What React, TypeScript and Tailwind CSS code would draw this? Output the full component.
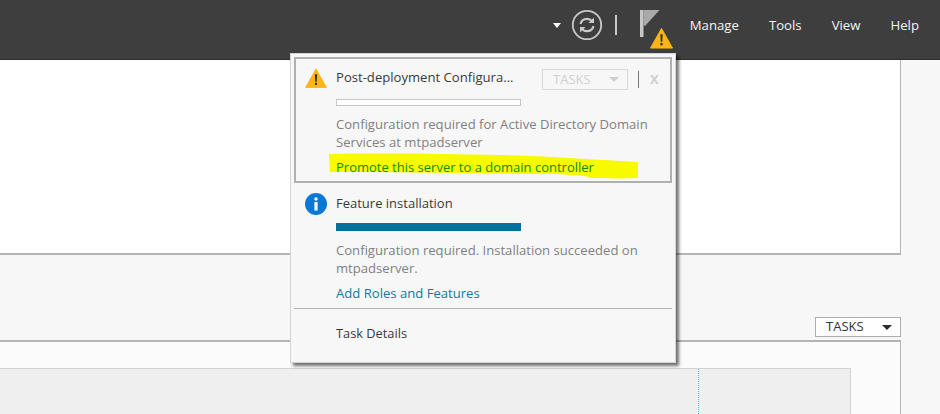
const font = "font-['Open_Sans',sans-serif]";

function RefreshIcon() {
  return (
    <svg width="32" height="32" viewBox="0 0 32 32" fill="none">
      <circle cx="16" cy="16" r="14.2" stroke="#c9c9c9" strokeWidth="1.8" />
      <path d="M9.5 15c.8-3.4 3.4-5.2 6.5-5.2 2.2 0 3.9.9 5 2.4" stroke="#c9c9c9" strokeWidth="2.2" />
      <path d="M23 8.5v5.6h-5.6z" fill="#c9c9c9" />
      <path d="M22.5 17c-.8 3.4-3.4 5.2-6.5 5.2-2.2 0-3.9-.9-5-2.4" stroke="#c9c9c9" strokeWidth="2.2" />
      <path d="M9 23.5v-5.6h5.6z" fill="#c9c9c9" />
    </svg>
  );
}

function WarningIcon({ width, height }: { width: number; height: number }) {
  return (
    <svg width={width} height={height} viewBox="0 0 24 22">
      <path d="M12 1 23.5 21.5H.5z" fill="#fdb515" stroke="#fdb515" strokeLinejoin="round" />
      <path d="M10.8 7h2.4l-.4 8h-1.6z" fill="#2b2b2b" />
      <rect x="10.9" y="16.2" width="2.2" height="2.4" fill="#2b2b2b" />
    </svg>
  );
}

function FlagIcon() {
  return (
    <svg width="20" height="27" viewBox="0 0 20 27">
      <rect x="0" y="0" width="3.5" height="27" fill="#c6c6c6" />
      <path d="M3.5 0H19.5L5 16 3.5 15z" fill="#a9a9a9" />
    </svg>
  );
}

function Highlight() {
  return (
    <svg className="absolute left-[33px] top-[94px]" width="312" height="30" viewBox="0 0 312 30">
      <path
        d="M0 1C60 0 120 1 170 2 220 3 270 7 309 9L309 25C290 26 270 25 262 25 255 22 240 21 200 21 130 20 60 19 1 19z"
        fill="#f8fa00"
      />
    </svg>
  );
}

export default function App() {
  return (
    <div className={`${font} relative w-[940px] h-[414px] overflow-hidden bg-[#f7f7f7] flex flex-col`}>
      {/* top bar */}
      <header className="h-[60px] shrink-0 bg-[#3e3e3e] flex items-center pb-[8px] text-white text-[13.2px] border-b border-[#2f2f2f]">
        <div className="ml-auto flex items-center">
          <span className="w-0 h-0 border-x-[4px] border-x-transparent border-t-[5px] border-t-white mr-[10px]" />
          <div className="-mt-[2px]">
            <RefreshIcon />
          </div>
          <span className="w-[2px] h-[20px] bg-[#c9c9c9] -mt-[2px] ml-[12px] mr-[23px]" />
          <div className="relative w-[24px] h-[27px] -mt-[5px] mr-[26px]">
            <FlagIcon />
            <div className="absolute left-[10px] top-[17px]">
              <WarningIcon width={23} height={22} />
            </div>
          </div>
          <nav className="flex items-center gap-[30px] pr-[21px] text-[#f4f4f4]">
            <span>Manage</span>
            <span>Tools</span>
            <span>View</span>
            <span>Help</span>
          </nav>
        </div>
      </header>

      {/* dashboard panels */}
      <main className="flex-1 flex flex-col pr-[39px]">
        <section className="h-[195px] shrink-0 bg-white border-r border-b-2 border-[#b4b4b4]" />
        <div className="flex justify-end mt-[62px] mb-[3px]">
          <div className="w-[86px] h-[20px] bg-white border border-[#aeaeae] flex items-center justify-between pl-[10px] pr-[8px] text-[13px] text-[#333]">
            <span>TASKS</span>
            <span className="w-0 h-0 border-x-[5px] border-x-transparent border-t-[5px] border-t-[#2a2a2a]" />
          </div>
        </div>
        <section className="flex-1 bg-[#fbfbfb] border-t-2 border-r border-[#b4b4b4] pt-[26px] pr-[49px]">
          <div className="relative h-full bg-[#efefef] border-t border-r border-[#d2d2d2]">
            <span className="absolute left-[698px] top-0 bottom-0 border-l border-dotted border-[#4fb8d8]" />
          </div>
        </section>
      </main>

      {/* notifications flyout */}
      <div className="absolute left-[290px] top-[53px] w-[386px] h-[310px] bg-[#f7f7f7] border border-[#d4d4d4] shadow-[3px_3px_3px_rgba(0,0,0,0.55)] p-[3px] text-[13.1px] leading-[18px]">
        <div className="relative h-[126px] border-2 border-[#b0b0b0] pl-[40px] pt-[7px]">
          <Highlight />
          <div className="absolute left-[9px] top-[9px]">
            <WarningIcon width={22} height={20} />
          </div>
          <div className="flex items-center h-[22px] text-[#3a3a3a] text-[13.1px]">
            <span className="w-[206px]">Post-deployment Configura...</span>
            <span className="w-[86px] h-[21px] mt-[4px] border border-[#d9d9d9] flex items-center justify-between pl-[10px] pr-[8px] text-[#d0d0d0] text-[13px]">
              TASKS
              <span className="w-0 h-0 border-x-[5px] border-x-transparent border-t-[5px] border-t-[#cfcfcf]" />
            </span>
            <span className="w-[1px] h-[17px] mt-[4px] bg-[#777] ml-[10px]" />
            <span className="ml-[11px] mt-[4px] text-[#cfcfcf] font-bold">X</span>
          </div>
          <div className="w-[185px] h-[7px] mt-[11px] border border-[#c6c6c6] bg-white" />
          <p className="relative mt-[9px] w-[330px] text-[#808080]">
            Configuration required for Active Directory Domain Services at mtpadserver
          </p>
          <p className="relative mt-[7px] text-[13px] text-[#0f8a0f]">Promote this server to a domain controller</p>
        </div>

        <div className="relative pl-[42px] pt-[11px]">
          <svg className="absolute left-[11px] top-[10px]" width="22" height="22" viewBox="0 0 22 22">
            <circle cx="11" cy="11" r="11" fill="#0a78d4" />
            <circle cx="11" cy="6" r="1.7" fill="#fff" />
            <rect x="9.4" y="9" width="3.2" height="8.5" fill="#fff" />
          </svg>
          <div className="h-[20px] text-[#3a3a3a] text-[13px]">Feature installation</div>
          <div className="w-[185px] h-[8px] mt-[9px] bg-[#00739c]" />
          <p className="mt-[10px] w-[330px] text-[#808080]">
            Configuration required. Installation succeeded on mtpadserver.
          </p>
          <p className="mt-[7px] text-[#12789c]">Add Roles and Features</p>
        </div>

        <div className="mt-[6px] border-t border-[#b4b4b4] pl-[42px] pt-[15px] text-[12.8px] text-[#3a3a3a]">Task Details</div>
      </div>
    </div>
  );
}
